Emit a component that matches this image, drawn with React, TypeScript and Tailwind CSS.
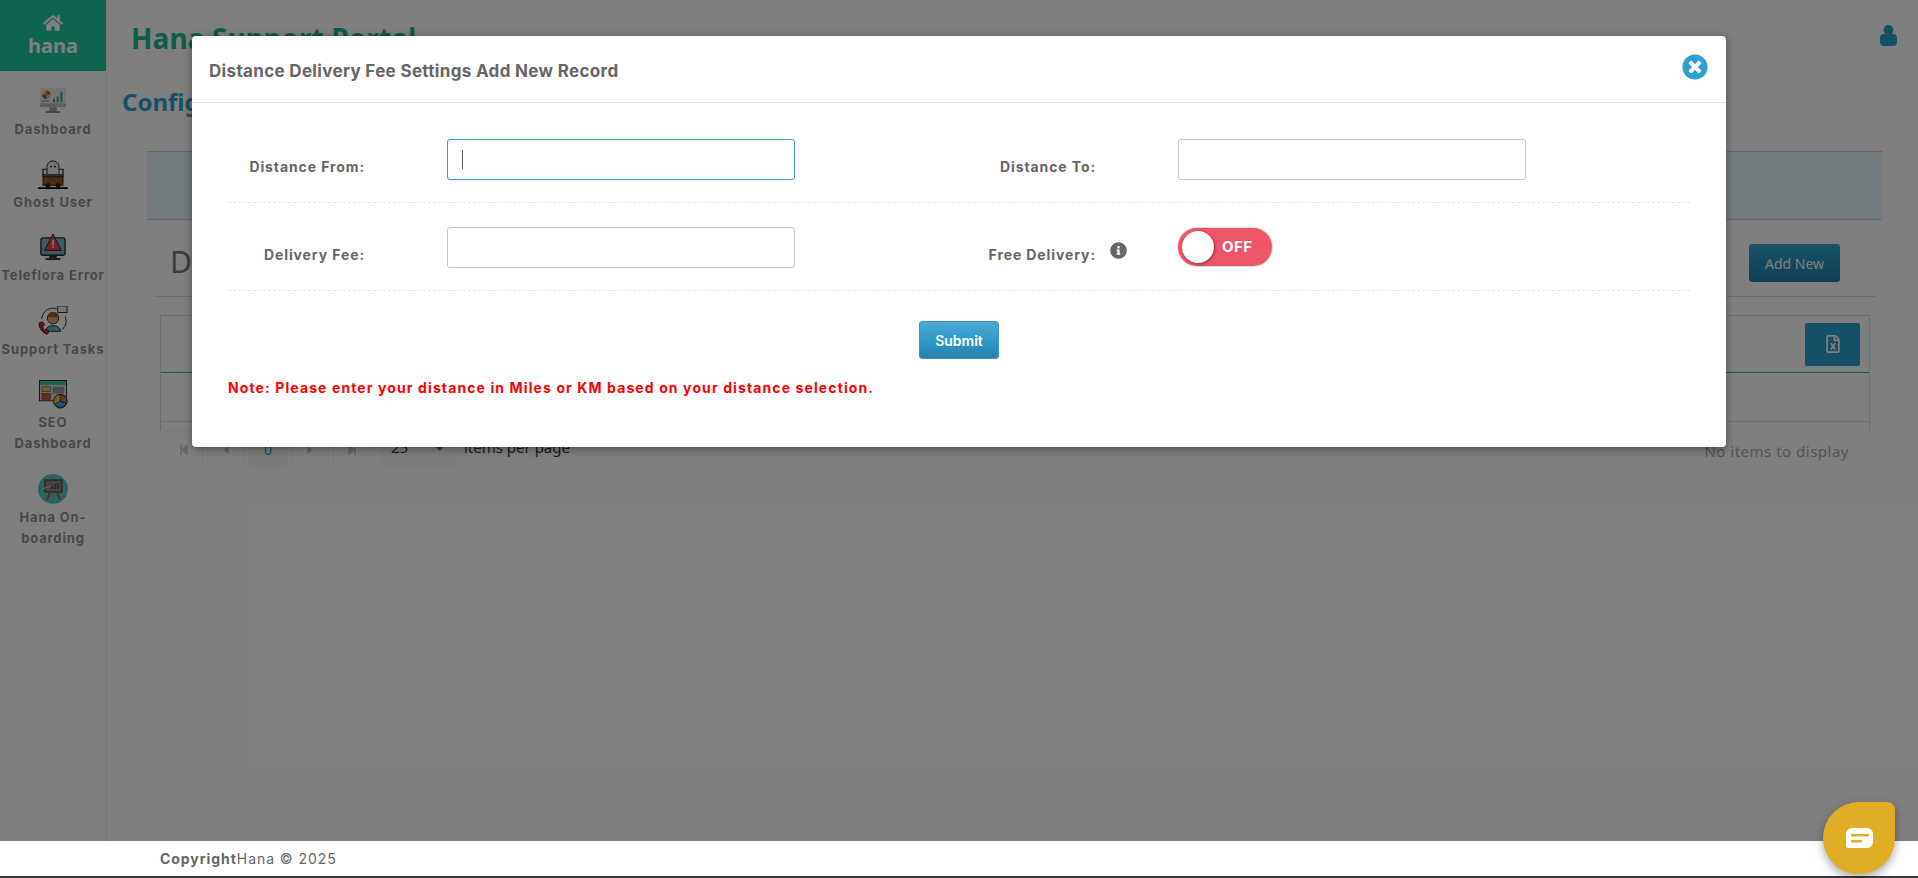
import { FaHome, FaInfoCircle, FaTimesCircle, FaRegFileExcel, FaStepBackward, FaStepForward, FaCaretLeft, FaCaretRight, FaCaretDown } from "react-icons/fa";

const sans = "font-['Noto_Sans',sans-serif]";
const inter = "font-['Inter',sans-serif]";

function DashboardIcon() {
  return (
    <svg width="28" height="27" viewBox="0 0 30 28" preserveAspectRatio="none">
      <rect x="1" y="1" width="28" height="19" rx="1" fill="#e8e8e8" />
      <rect x="1" y="17" width="28" height="4" fill="#b8bcc4" />
      <rect x="11" y="21" width="8" height="4" fill="#9aa0a8" />
      <rect x="7" y="25" width="16" height="2" rx="1" fill="#8a8f96" />
      <circle cx="8" cy="8" r="4.5" fill="#f5c030" />
      <path d="M8 8V3.5A4.5 4.5 0 0 1 12.5 8Z" fill="#e2483d" />
      <path d="M8 8H3.5A4.5 4.5 0 0 0 8 12.5Z" fill="#6a4fc0" />
      <rect x="15" y="12" width="2" height="4" fill="#2fa38a" />
      <rect x="19" y="10" width="2" height="6" fill="#2fa38a" />
      <rect x="23" y="5" width="2" height="11" fill="#2fa38a" />
      <rect x="3" y="14" width="8" height="1" fill="#6a7fe0" />
    </svg>
  );
}

function GhostIcon() {
  return (
    <svg width="30" height="30" viewBox="0 0 30 32" preserveAspectRatio="none">
      <path d="M9 17V7a6 6 0 0 1 12 0v10Z" fill="#ececec" stroke="#222" strokeWidth="1" />
      <circle cx="13" cy="7" r="1" fill="#111" />
      <circle cx="17" cy="7" r="1" fill="#111" />
      <path d="M9 10H5v6M21 10h4v6" fill="none" stroke="#444" strokeWidth="1.5" />
      <rect x="4" y="15" width="22" height="3" fill="#555" />
      <rect x="5" y="18" width="20" height="9" fill="#9a5a28" stroke="#222" strokeWidth="1" />
      <circle cx="10" cy="27" r="2.5" fill="#222" />
      <circle cx="20" cy="27" r="2.5" fill="#222" />
      <rect x="0" y="29" width="30" height="2" rx="1" fill="#000" />
    </svg>
  );
}

function ErrorIcon() {
  return (
    <svg width="26" height="27" viewBox="0 0 28 28" preserveAspectRatio="none">
      <rect x="1" y="4" width="26" height="18" rx="2" fill="#7fb2c8" stroke="#1f2f3a" strokeWidth="1.5" />
      <rect x="10" y="22" width="8" height="3" fill="#22323c" />
      <rect x="6" y="25" width="16" height="2" fill="#22323c" />
      <path d="M14 0 23 17H5Z" fill="#e8414f" stroke="#222" strokeWidth="1" />
      <rect x="13.2" y="6" width="1.6" height="6" fill="#fff" />
      <rect x="13.2" y="13" width="1.6" height="1.6" fill="#fff" />
    </svg>
  );
}

function SupportIcon() {
  return (
    <svg width="30" height="30" viewBox="0 0 32 32">
      <path d="M4 14A12 12 0 0 1 20 3" fill="none" stroke="#222" strokeWidth="1" />
      <path d="M29 11A13 13 0 0 1 26 25" fill="none" stroke="#222" strokeWidth="1" />
      <rect x="21" y="0" width="10" height="7" fill="#eee" stroke="#222" strokeWidth="1" />
      <path d="M8 27c0-4 4-6 8-6s8 2 8 6Z" fill="#58c0a8" stroke="#222" strokeWidth="1" />
      <circle cx="16" cy="13" r="6" fill="#e0a870" stroke="#222" strokeWidth="1" />
      <path d="M10 12a6 6 0 0 1 12 0Z" fill="#9a5a30" />
      <path d="M1 18c0 6 4 11 9 12l2-3-3-2-2 1c-1-1-2-3-2-5l2-1-2-3Z" fill="#d0283c" stroke="#222" strokeWidth="1" />
    </svg>
  );
}

function SeoIcon() {
  return (
    <svg width="29" height="29" viewBox="0 0 30 30">
      <rect x="0.5" y="0.5" width="28" height="21" fill="#d8d8d8" stroke="#222" strokeWidth="1" />
      <rect x="1" y="1" width="27" height="4" fill="#34c8a0" />
      <rect x="3" y="7" width="9" height="5" fill="#e8c050" stroke="#333" strokeWidth="0.5" />
      <rect x="3" y="14" width="9" height="6" fill="#d85040" stroke="#333" strokeWidth="0.5" />
      <rect x="14" y="7" width="12" height="7" fill="#999" />
      <circle cx="22" cy="22" r="7" fill="#e8c050" stroke="#222" strokeWidth="1" />
      <path d="M22 22V15a7 7 0 0 1 6.5 9.5Z" fill="#e06a50" stroke="#222" strokeWidth="0.8" />
      <path d="M22 22l6.5 2.5a7 7 0 0 1-12 .5Z" fill="#38b0e0" stroke="#222" strokeWidth="0.8" />
    </svg>
  );
}

function OnboardIcon() {
  return (
    <svg width="30" height="30" viewBox="0 0 30 30">
      <circle cx="15" cy="15" r="15" fill="#52c8c4" />
      <rect x="7" y="6" width="17" height="12" fill="#888" stroke="#5a3a2a" strokeWidth="1.2" />
      <path d="M12 18 9 26M19 18l3 8" stroke="#c05038" strokeWidth="2" />
      <path d="M14 15v-3M17 15v-5M20 15V9" stroke="#333" strokeWidth="1.2" />
      <path d="M4 15l9-3" stroke="#e8c890" strokeWidth="1.2" />
    </svg>
  );
}

const navItems = [
  { icon: <DashboardIcon />, label: ["Dashboard"], pad: "pt-[16px]", gap: "mt-[5px]" },
  { icon: <GhostIcon />, label: ["Ghost User"], pad: "pt-[20px]", gap: "mt-[2px]" },
  { icon: <ErrorIcon />, label: ["Teleflora Error"], pad: "pt-[21px]", gap: "mt-[4px]" },
  { icon: <SupportIcon />, label: ["Support Tasks"], pad: "pt-[20px]", gap: "mt-[3px]" },
  { icon: <SeoIcon />, label: ["SEO", "Dashboard"], pad: "pt-[20px]", gap: "mt-[3px]" },
  { icon: <OnboardIcon />, label: ["Hana On-", "boarding"], pad: "pt-[20px]", gap: "mt-[3px]" },
];

function Sidebar() {
  return (
    <aside className="w-[107px] shrink-0 border-r border-[#eeeeee] bg-white">
      <div className="flex h-[71px] flex-col items-center bg-[#1cc99f] pt-[13px] text-white">
        <FaHome className="text-[20px]" />
        <span className={`text-[20px] leading-[26px] font-bold ${sans}`}>hana</span>
      </div>
      {navItems.map((item) => (
        <div key={item.label[0]} className={`flex flex-col items-center ${item.pad}`}>
          {item.icon}
          <div className={`${item.gap} text-center text-[13px] leading-[21px] font-bold tracking-[0.85px] whitespace-nowrap text-[#8f8f8f] ${inter}`}>
            {item.label.map((l) => (
              <div key={l}>{l}</div>
            ))}
          </div>
        </div>
      ))}
    </aside>
  );
}

function PagerButton({ children, active }: { children: React.ReactNode; active?: boolean }) {
  return (
    <div className={`flex h-[37px] w-[38px] items-center justify-center border border-[#f4f4f4] text-[14px] ${active ? "bg-[#f7f7f7] text-[#2b9fd0]" : "text-[#cccccc]"}`}>
      {children}
    </div>
  );
}

function Page() {
  return (
    <main className={`flex min-w-0 flex-1 flex-col ${sans}`}>
      <div className="flex h-[71px] items-start justify-between pt-[18px] pr-[21px] pl-[24px]">
        <h1 className="text-[28px] leading-[40px] font-bold tracking-[0.1px] text-[#1cb890]">Hana Support Portal</h1>
        <svg width="17" height="21" viewBox="0 0 17 21" className="mt-[7px]">
          <circle cx="8.5" cy="5" r="5" fill="#2b9fd0" />
          <rect x="0" y="9" width="17" height="12" rx="4" fill="#2b9fd0" />
        </svg>
      </div>
      <h2 className="pt-[14px] pl-[15px] text-[24px] leading-[34px] font-bold text-[#2b9fd0]">Configuration</h2>
      <div className="mt-[32px] ml-[40px] h-[69px] w-[1735px] border-y border-[#a8d8ee] bg-[#e8f6fc]" />
      <div className="mr-[42px] ml-[47px] flex h-[77px] items-end justify-between border-b border-[#dddddd] pr-[36px] pb-[14px] pl-[16px]">
        <span className="text-[30px] leading-[40px] text-[#6f7a85]">Distance Delivery Fee Settings</span>
        <button className="h-[38px] w-[91px] rounded-[3px] bg-gradient-to-b from-[#35a5d5] to-[#1f7ea8] text-[14px] text-white">Add New</button>
      </div>
      <div className="mt-[18px] mr-[48px] ml-[53px] border-x border-[#dddddd]">
        <div className="flex h-[58px] items-center justify-end border-t border-b border-t-[#dddddd] border-b-[#2b9fd0] pr-[9px]">
          <button className="flex h-[43px] w-[55px] items-center justify-center rounded-[2px] bg-[#2b9fd0] text-[18px] text-white">
            <FaRegFileExcel />
          </button>
        </div>
        <div className="h-[49px] border-b border-[#dddddd]" />
        <div className="h-[9px]" />
      </div>
      <div className="mr-[69px] ml-[58px] flex items-center justify-between">
        <div className="flex items-center gap-[4px]">
          <PagerButton><FaStepBackward className="text-[12px]" /></PagerButton>
          <PagerButton><FaCaretLeft /></PagerButton>
          <PagerButton active>0</PagerButton>
          <PagerButton><FaCaretRight /></PagerButton>
          <PagerButton><FaStepForward className="text-[12px]" /></PagerButton>
          <div className="ml-[4px] flex h-[37px] w-[78px] items-center justify-between bg-[#fafafa] pr-[10px] pb-[4px] pl-[12px] text-[15px] text-[#333333]">
            25 <FaCaretDown className="text-[#777777]" />
          </div>
          <span className="ml-[3px] pb-[4px] text-[15px] text-[#333333]">items per page</span>
        </div>
        <span className="mt-[3px] text-[15px] tracking-[0.5px] text-[#aaaaaa]">No items to display</span>
      </div>
    </main>
  );
}

function FormLabel({ children }: { children: React.ReactNode }) {
  return (
    <label className="mt-[18px] w-[137px] shrink-0 text-right text-[14px] leading-[20px] font-bold tracking-[0.9px] whitespace-nowrap text-[#666666]">
      {children}
    </label>
  );
}

function Modal() {
  return (
    <div className={`absolute top-[36px] left-[192px] h-[411px] w-[1534px] rounded-[4px] bg-white shadow-[0_2px_8px_rgba(0,0,0,0.4)] ${inter}`}>
      <div className="flex h-[67px] items-center justify-between border-b border-[#e5e5e5] pr-[18px] pl-[17px]">
        <h3 className="mt-[5px] text-[17px] font-bold tracking-[0.33px] text-[#666666]">Distance Delivery Fee Settings Add New Record</h3>
        <FaTimesCircle className="mb-[5px] text-[26px] text-[#2e9fcf]" />
      </div>
      <div className="px-[36px] pt-[36px]">
        <div className="grid grid-cols-2 border-b border-dashed border-[#e5e5e5] pb-[22px]">
          <div className="flex">
            <FormLabel>Distance From:</FormLabel>
            <div className="relative ml-[82px]">
              <input className="block h-[41px] w-[348px] rounded-[3px] border border-[#3a97c4] bg-white px-[15px] outline-none" />
              <span className="absolute top-[11px] left-[15px] h-[19px] w-px bg-[#555555]" />
            </div>
          </div>
          <div className="flex">
            <FormLabel>Distance To:</FormLabel>
            <input className="ml-[82px] h-[41px] w-[348px] rounded-[3px] border border-[#c4c4c4] bg-white outline-none" />
          </div>
        </div>
        <div className="mt-[24px] grid grid-cols-2 border-b border-dashed border-[#e5e5e5] pb-[22px]">
          <div className="flex">
            <FormLabel>Delivery Fee:</FormLabel>
            <input className="ml-[82px] h-[41px] w-[348px] rounded-[3px] border border-[#c4c4c4] bg-white outline-none" />
          </div>
          <div className="flex">
            <FormLabel>Free Delivery:</FormLabel>
            <FaInfoCircle className="mt-[15px] ml-[14px] w-[17px] text-[17px] text-[#666666]" />
            <div className="mt-[1px] ml-[51px] flex h-[38px] w-[94px] items-center rounded-full bg-[#ef5569] pl-[4px] shadow-[0_0_0_1px_#dddddd]">
              <span className="h-[32px] w-[32px] rounded-full bg-white shadow-[1px_1px_3px_rgba(0,0,0,0.4)]" />
              <span className="ml-[8px] text-[15px] font-bold tracking-[0.4px] text-white">OFF</span>
            </div>
          </div>
        </div>
        <div className="mt-[30px] flex justify-center">
          <button className="h-[38px] w-[80px] rounded-[3px] border border-[#3a97c4] bg-gradient-to-b from-[#4aa9d4] via-[#2e9aca] to-[#2a80ab] text-[14px] font-semibold text-white">
            Submit
          </button>
        </div>
        <p className="mt-[19px] text-[14px] leading-[20px] font-bold tracking-[1.11px] text-[#ff0000]">
          Note: Please enter your distance in Miles or KM based on your distance selection.
        </p>
      </div>
    </div>
  );
}

export default function App() {
  return (
    <div className="relative flex h-[878px] w-full flex-col overflow-hidden bg-white">
      <div className="flex h-[841px] shrink-0">
        <Sidebar />
        <Page />
      </div>
      <div className="absolute inset-x-0 top-0 h-[841px] bg-black/50" />
      <Modal />
      <footer className={`flex h-[35px] shrink-0 items-center bg-white pl-[160px] text-[14px] tracking-[0.95px] text-[#666666] ${inter}`}>
        <span className="font-bold">Copyright</span>Hana © 2025
      </footer>
      <div className="h-[2px] bg-[#3a3a3a]" />
      <button className="absolute top-[802px] left-[1823px] flex h-[72px] w-[72px] items-center justify-center rounded-[36px] rounded-tr-[8px] bg-[#e0ad24] shadow-[0_4px_10px_rgba(0,0,0,0.35)]">
        <svg width="27" height="21" viewBox="0 0 27 21">
          <path d="M6 0h15a6 6 0 0 1 6 6v8a6 6 0 0 1-6 6H2a2 2 0 0 1-2-2V6a6 6 0 0 1 6-6Z" fill="#fff" />
          <rect x="5" y="6" width="18" height="2.5" rx="1.2" fill="#e0ad24" />
          <rect x="5" y="12" width="11" height="2.5" rx="1.2" fill="#e0ad24" />
        </svg>
      </button>
    </div>
  );
}
